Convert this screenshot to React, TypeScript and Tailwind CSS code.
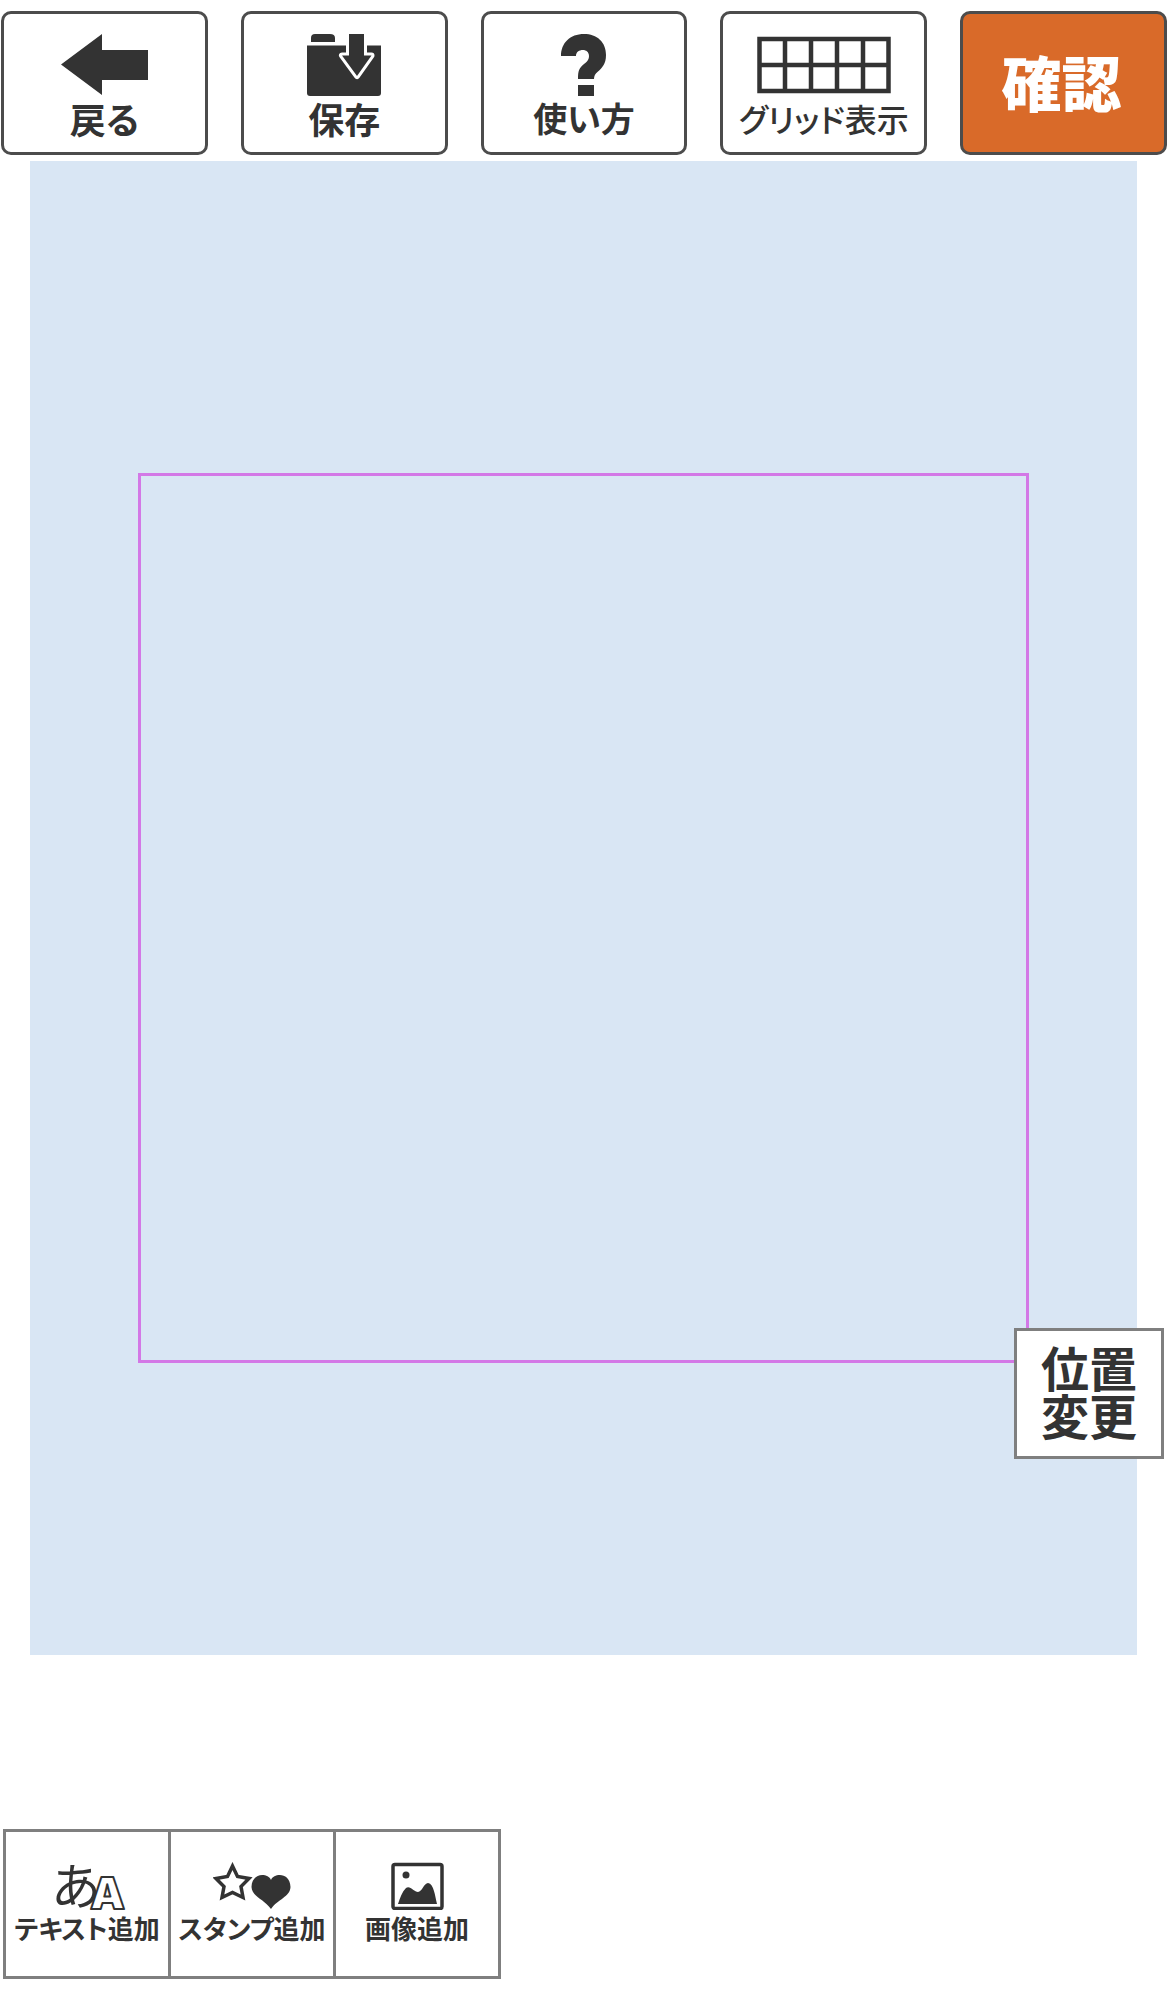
import React from 'react';

const BackIcon: React.FC = () => (
  <svg width="87" height="62" viewBox="0 0 87 62" fill="#333" aria-hidden="true">
    <path d="M0 30.500 41 0V16H87V46H41V61Z" />
  </svg>
);

const SaveIcon: React.FC = () => (
  <svg width="74" height="62" viewBox="0 0 74 62" fill="#333" aria-hidden="true">
    <path d="M4 8V4Q4 0 8 0H23Q28 0 28 4V8Z" />
    <path d="M0 11.500H74V59Q74 62 71 62H3Q0 62 0 59Z" />
    <path
      d="M42 0H57V21.500H64.500L50 42L35 21.500H42Z"
      stroke="#fff"
      strokeWidth="6"
      strokeLinejoin="round"
      paintOrder="stroke"
    />
  </svg>
);

const HelpIcon: React.FC = () => (
  <svg width="45" height="62" viewBox="0 0 45 62" fill="#333" aria-hidden="true">
    <path d="M0 22C0 9 9 0 23 0C36 0 45 8 45 21C45 30 41 34 37 37.500C34 40 33 42 33 45H17C17 37 18 34 23 30C27 27 28 25 28 22C28 18 25 16 22 16C18 16 15 18 15 22Z" />
    <path d="M17 51H33V62H17Z" />
  </svg>
);

const GridIcon: React.FC = () => (
  <svg width="134" height="62" viewBox="0 0 134 62" fill="none" stroke="#333" strokeWidth="4.500" aria-hidden="true">
    <path d="M2.500 5H131.500V57H2.500ZM2 31H132M28 5V57M54 5V57M80 5V57M106 5V57" />
  </svg>
);

const TextIcon: React.FC = () => (
  <svg width="78" height="48" viewBox="0 0 78 48" className="overflow-visible" fill="#333" aria-hidden="true">
    <text x="3" y="43" fontSize="50" fontWeight="400" fontFamily="'Noto Sans CJK JP', sans-serif">
      あ
    </text>
    <text
      x="42"
      y="47"
      fontSize="44"
      fontWeight="900"
      fontFamily="Inter, sans-serif"
      fill="#fff"
      stroke="#333"
      strokeWidth="2"
      strokeLinejoin="round"
    >
      A
    </text>
  </svg>
);

const StampIcon: React.FC = () => (
  <svg width="78" height="48" viewBox="0 0 78 48" aria-hidden="true">
    <path
      d="M19.500 4L24.500 14.500L36 16.500L28 24.500L30 35.500L19.500 30.500L9 35.500L11 24.500L3 16.500L14.500 14.500Z"
      fill="none"
      stroke="#333"
      strokeWidth="3.500"
    />
    <path
      d="M58 18C61 11 77 10 77.500 25C77 35 65 37 58 47C51 37 39 35 38.500 25C39 10 55 11 58 18Z"
      fill="#333"
    />
  </svg>
);

const ImageIcon: React.FC = () => (
  <svg width="53" height="48" viewBox="0 0 53 48" fill="#333" aria-hidden="true">
    <rect x="2" y="2.500" width="49" height="44" rx="2" fill="none" stroke="#333" strokeWidth="3.500" />
    <circle cx="15" cy="13" r="3.500" />
    <path d="M7 42C9 36 11 30 15 26C19 23 23 30 27 30C31 30 33 21 37 21C43 22 44 34 46 42Z" />
  </svg>
);

const topItems = [
  { label: '戻る', icon: <BackIcon />, text: 'text-4xl/10 font-bold' },
  { label: '保存', icon: <SaveIcon />, text: 'text-4xl/10 font-bold' },
  { label: '使い方', icon: <HelpIcon />, text: 'text-[34px]/10 font-bold' },
  { label: 'グリッド表示', icon: <GridIcon />, text: 'text-[32px]/10 font-medium' },
];

const addItems = [
  { label: 'テキスト追加', icon: <TextIcon /> },
  { label: 'スタンプ追加', icon: <StampIcon /> },
  { label: '画像追加', icon: <ImageIcon /> },
];

const App: React.FC = () => {
  return (
    <div className="min-h-screen bg-white pb-4 font-['Noto_Sans_CJK_JP',sans-serif] text-[#333]">
      <header className="grid grid-cols-5 gap-[33px] pt-[11px] pr-[3px] pl-px">
        {topItems.map((item) => (
          <button
            key={item.label}
            type="button"
            className="flex h-36 flex-col items-center rounded-[10px] border-[3px] border-[#4c4c4c] bg-white pt-5"
          >
            {item.icon}
            <span className={`mt-0.5 whitespace-nowrap [font-feature-settings:'palt'] ${item.text}`}>{item.label}</span>
          </button>
        ))}
        <button
          type="button"
          className="h-36 rounded-[10px] border-[3px] border-[#4c4c4c] bg-[#d96a29] pr-1 pb-1 text-6xl font-black text-white"
        >
          確認
        </button>
      </header>

      <main className="relative mt-1.5 pr-[33px] pl-[30px]">
        <div className="flex aspect-[1107/1494] justify-center bg-[#d9e6f4] pt-[312px]">
          <div className="aspect-square w-[80.4%] self-start border-[3px] border-[#d378e6]" />
        </div>
        <button
          type="button"
          className="absolute right-1.5 bottom-[196px] border-[3px] border-[#7f7f7f] bg-white px-6 pt-[11px] pb-[18px] text-5xl/12 font-bold"
        >
          位置
          <br />
          変更
        </button>
      </main>

      <footer className="mt-[174px] ml-[3px] flex">
        <div className="flex border-y-[3px] border-l-[3px] border-[#7f7f7f]">
          {addItems.map((item) => (
            <button
              key={item.label}
              type="button"
              className="flex h-36 w-[165px] flex-col items-center border-r-[3px] border-[#7f7f7f] bg-white pt-[30px]"
            >
              {item.icon}
              <span className="mt-0.5 whitespace-nowrap text-[26px]/8 font-bold [font-feature-settings:'palt']">
                {item.label}
              </span>
            </button>
          ))}
        </div>
      </footer>
    </div>
  );
};

export default App;
